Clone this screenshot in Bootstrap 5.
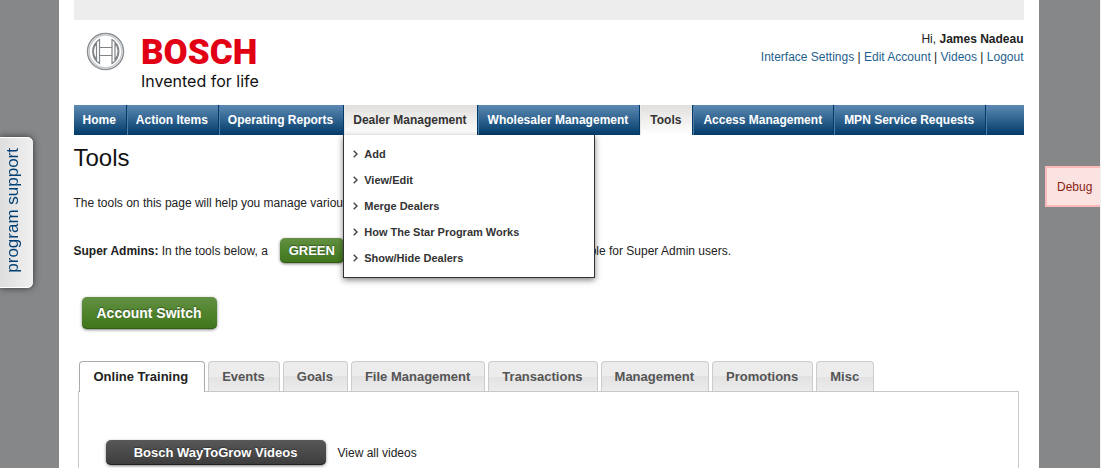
<!DOCTYPE html>
<html lang="en">
<head>
<meta charset="utf-8">
<meta name="viewport" content="width=device-width, initial-scale=1">
<title>Tools</title>
<link href="https://cdn.jsdelivr.net/npm/bootstrap@5.3.0/dist/css/bootstrap.min.css" rel="stylesheet">
<style>
body{font-family:"Liberation Sans",Arial,sans-serif;font-size:12px;line-height:18px;color:#222;background:#868789;padding-right:3px;overflow-x:hidden;min-height:100vh;border-right:1px solid #f0f0ee}
html{scrollbar-width:none}
a{color:#1f5f8f;text-decoration:none}
.page-shell{max-width:980px;min-height:100vh;padding:0 15px;background:#fff}
.top-strip{height:20px;background:#ededed}
.masthead{height:85px;padding-top:10px}
.brand-logo{margin-top:1px;margin-left:11px}
.main-menu{height:30px;background:linear-gradient(#5d8ab3,#003a6a)}
.main-menu .nav-link{height:30px;padding:0 10px 0 8px;border-right:1px solid #003a6a;border-left:1px solid #4f7ea6;color:#fff;font-weight:700;line-height:30px;font-size:12px;white-space:nowrap}
.main-menu .nav-item:first-child .nav-link{border-left-color:transparent}
.main-menu .dropdown ~ .nav-item .nav-link{padding:0 11px 0 9px}
.main-menu .nav-link.lit{background:linear-gradient(#e0dfdd,#fff);color:#333;border-left-color:#e8e8e6}
.main-menu .tail{border-left:1px solid #4f7ea6}
.main-menu .dropdown-menu{top:30px;left:-1px;width:252px;padding:6px 0;border:1px solid #333;border-top:0;border-radius:0;box-shadow:0 2px 6px rgba(0,0,0,.5);font-size:11px;margin:0}
.main-menu .dropdown-item{display:flex;align-items:center;gap:6px;padding:0 9px;color:#333;font-weight:700;line-height:26px}
h1{font-size:24px;line-height:30px;color:#111}
.intro{margin:21px 0 0}
.note-row{margin:26px 0 0}
.note-row .pill{margin:0 9px 0 12px}
.pill{border:0;border-radius:5px;color:#fff;font-weight:700;text-shadow:0 -1px 1px rgba(0,0,0,.35);background:linear-gradient(#629142,#3f751a);box-shadow:inset 0 -1px 0 #2f5c10,0 1px 3px rgba(0,0,0,.5)}
.pill-sm{height:25px;width:64px;padding:0;font-size:13px}
.pill-lg{display:block;height:32px;width:135px;margin:34px 0 0 8px;font-size:14px}
.pill-dark{height:25px;width:220px;font-size:13px;background:linear-gradient(#585858,#3c3c3c);box-shadow:inset 0 -1px 0 #222,0 1px 3px rgba(0,0,0,.5)}
.section-tabs{gap:3px;border:0;padding-left:5px;margin-top:32px}
.section-tabs .nav-link{height:30px;margin:0;padding:0 14px 0 13px;border:1px solid #ccc;border-bottom:0;border-radius:4px 4px 0 0;background:linear-gradient(#ececec 50%,#e2e2e2 50%,#ececec);color:#555;font-size:13px;font-weight:700;line-height:30px}
.section-tabs .nav-link.active{height:31px;margin-bottom:-1px;padding:0 16px 0 14px;border-color:#aaa;background:#fff;color:#222;position:relative}
.tab-panel{margin:0 5px 0 4px;border:1px solid #c8c8c8;border-bottom:0;padding:48px 27px 20px}
.support-tab{position:fixed;left:0;top:137px;height:151px;width:33px;padding:0 7px 0 0;border:0;border-radius:0 6px 6px 0;background:linear-gradient(90deg,#dedede,#f0f0f0);box-shadow:0 0 7px #333,inset 0 1px #fff,inset 0 -1px #fff;color:#003f73;font-size:17px}
.support-tab span{writing-mode:vertical-rl;transform:rotate(180deg)}
.debug-tab{position:fixed;right:1px;top:166px;height:41px;width:55px;border:2px solid #fbb9b9;border-right:0;background:#fbe3e2;color:#8a1f11;padding:0 0 0 10px;text-align:left;font-size:12px}
</style>
</head>
<body>
<main class="page-shell mx-auto">
<div class="top-strip"></div>
<header class="masthead d-flex justify-content-between">
<svg class="brand-logo" width="184" height="62" viewBox="85 31 184 62" role="img" aria-label="Bosch Invented for life">
<g fill="none" stroke="#8b9095"><circle cx="105.500" cy="51.500" r="18" stroke-width="1.500"/><circle cx="105.500" cy="51.500" r="16.300" stroke="#c4c6c8" stroke-width="1.200"/>
<path d="M99.500 39.500V47.500H112V39.500A14 14 0 0 1 112 63.500V55.500H99.500V63.500A14 14 0 0 1 99.500 39.500ZM99.500 47.500V55.500M112 47.500V55.500M96.500 43Q90 51.500 96.500 60ZM115 43Q121.500 51.500 115 60Z" stroke="#80858a" stroke-width="1.200"/></g>
<text x="141" y="64" font-size="35" font-weight="900" font-family="Roboto, sans-serif" fill="#e20015">BOSCH</text>
<text x="141" y="87" font-size="16" font-family="Inter, sans-serif" fill="#111">Invented for life</text>
</svg>
<div class="text-end">Hi, <strong>James Nadeau</strong><br><a href="#">Interface Settings</a> | <a href="#">Edit Account</a> | <a href="#">Videos</a> | <a href="#">Logout</a></div>
</header>
<nav class="main-menu" aria-label="Main">
<ul class="nav flex-nowrap">
<li class="nav-item"><a class="nav-link" href="#">Home</a></li>
<li class="nav-item"><a class="nav-link" href="#">Action Items</a></li>
<li class="nav-item"><a class="nav-link" href="#">Operating Reports</a></li>
<li class="nav-item dropdown"><a class="nav-link lit" href="#" aria-expanded="true">Dealer Management</a>
<ul class="dropdown-menu show">
<li><a class="dropdown-item" href="#"><svg width="5" height="8" viewBox="0 0 5 8"><path d="M.7.700 4 4 .700 7.300" fill="none" stroke="#444" stroke-width="1.400"/></svg>Add</a></li>
<li><a class="dropdown-item" href="#"><svg width="5" height="8" viewBox="0 0 5 8"><path d="M.7.700 4 4 .700 7.300" fill="none" stroke="#444" stroke-width="1.400"/></svg>View/Edit</a></li>
<li><a class="dropdown-item" href="#"><svg width="5" height="8" viewBox="0 0 5 8"><path d="M.7.700 4 4 .700 7.300" fill="none" stroke="#444" stroke-width="1.400"/></svg>Merge Dealers</a></li>
<li><a class="dropdown-item" href="#"><svg width="5" height="8" viewBox="0 0 5 8"><path d="M.7.700 4 4 .700 7.300" fill="none" stroke="#444" stroke-width="1.400"/></svg>How The Star Program Works</a></li>
<li><a class="dropdown-item" href="#"><svg width="5" height="8" viewBox="0 0 5 8"><path d="M.7.700 4 4 .700 7.300" fill="none" stroke="#444" stroke-width="1.400"/></svg>Show/Hide Dealers</a></li>
</ul></li>
<li class="nav-item"><a class="nav-link" href="#">Wholesaler Management</a></li>
<li class="nav-item"><a class="nav-link lit" href="#">Tools</a></li>
<li class="nav-item"><a class="nav-link" href="#">Access Management</a></li>
<li class="nav-item"><a class="nav-link" href="#">MPN Service Requests</a></li>
<li class="tail"></li>
</ul>
</nav>
<h1 class="mt-2 mb-0">Tools</h1>
<p class="intro">The tools on this page will help you manage various aspects of the program.</p>
<p class="note-row d-flex align-items-center"><span><strong>Super Admins:</strong> In the tools below, a</span><button class="pill pill-sm" type="button">GREEN</button><span>button indicates that the tools are only available for Super Admin users.</span></p>
<button class="pill pill-lg" type="button">Account Switch</button>
<ul class="nav nav-tabs section-tabs">
<li class="nav-item"><a class="nav-link active" href="#">Online Training</a></li>
<li class="nav-item"><a class="nav-link" href="#">Events</a></li>
<li class="nav-item"><a class="nav-link" href="#">Goals</a></li>
<li class="nav-item"><a class="nav-link" href="#">File Management</a></li>
<li class="nav-item"><a class="nav-link" href="#">Transactions</a></li>
<li class="nav-item"><a class="nav-link" href="#">Management</a></li>
<li class="nav-item"><a class="nav-link" href="#">Promotions</a></li>
<li class="nav-item"><a class="nav-link" href="#">Misc</a></li>
</ul>
<section class="tab-panel"><div class="d-flex align-items-center gap-2"><button class="pill pill-dark" type="button">Bosch WayToGrow Videos</button><span class="ms-1">View all videos</span></div></section>
</main>
<button class="support-tab" type="button"><span>program support</span></button>
<button class="debug-tab" type="button">Debug</button>
<script src="https://cdn.jsdelivr.net/npm/bootstrap@5.3.0/dist/js/bootstrap.bundle.min.js"></script>
</body>
</html>
